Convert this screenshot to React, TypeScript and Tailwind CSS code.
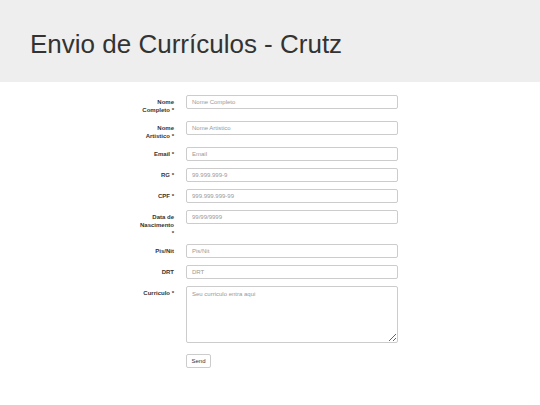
const fields = [
  { label: ['Nome', 'Completo *'], placeholder: 'Nome Completo' },
  { label: ['Nome', 'Artistico *'], placeholder: 'Nome Artistico' },
  { label: ['Email *'], placeholder: 'Email' },
  { label: ['RG *'], placeholder: '99.999.999-9' },
  { label: ['CPF *'], placeholder: '999.999.999-99' },
  { label: ['Data de', 'Nascimento', '*'], placeholder: '99/99/9999' },
  { label: ['Pis/Nit'], placeholder: 'Pis/Nit' },
  { label: ['DRT'], placeholder: 'DRT' },
];

export default function App() {
  return (
    <div className="w-[540px] h-[405px] bg-white text-[#333] font-['Liberation_Sans',Arial,sans-serif]">
      {/* Jumbotron */}
      <div className="h-[82px] bg-[#eeeeee] pt-[31px] pl-[30px]">
        <h1 className="text-[26px] leading-none font-normal">Envio de Currículos - Crutz</h1>
      </div>

      {/* Form */}
      <form className="pt-[13px] pl-[130px]" onSubmit={(e) => e.preventDefault()}>
        {fields.map((f) => (
          <div key={f.placeholder} className="flex items-start gap-[12px] mb-[7px]">
            <label className="w-[44px] pt-[3px] text-right text-[6px] leading-[8px] font-bold">
              {f.label.map((l) => (
                <div key={l}>{l}</div>
              ))}
            </label>
            <input
              type="text"
              placeholder={f.placeholder}
              className="block w-[212px] h-[14px] px-[5px] border border-[#cccccc] rounded-[2px] text-[6px] placeholder:text-[#999] outline-none"
            />
          </div>
        ))}

        <div className="flex items-start gap-[12px]">
          <label className="w-[44px] pt-[3px] text-right text-[6px] leading-[8px] font-bold">Curriculo *</label>
          <textarea
            placeholder="Seu curriculo entra aqui"
            className="block w-[212px] h-[57px] px-[5px] py-[3px] border border-[#cccccc] rounded-[2px] text-[6px] leading-[8px] placeholder:text-[#999] outline-none"
          />
        </div>

        <div className="pl-[56px] pt-[11px]">
          <button
            type="submit"
            className="block w-[25px] h-[14px] border border-[#cccccc] rounded-[2px] bg-white text-[6px] text-[#333]"
          >
            Send
          </button>
        </div>
      </form>
    </div>
  );
}
